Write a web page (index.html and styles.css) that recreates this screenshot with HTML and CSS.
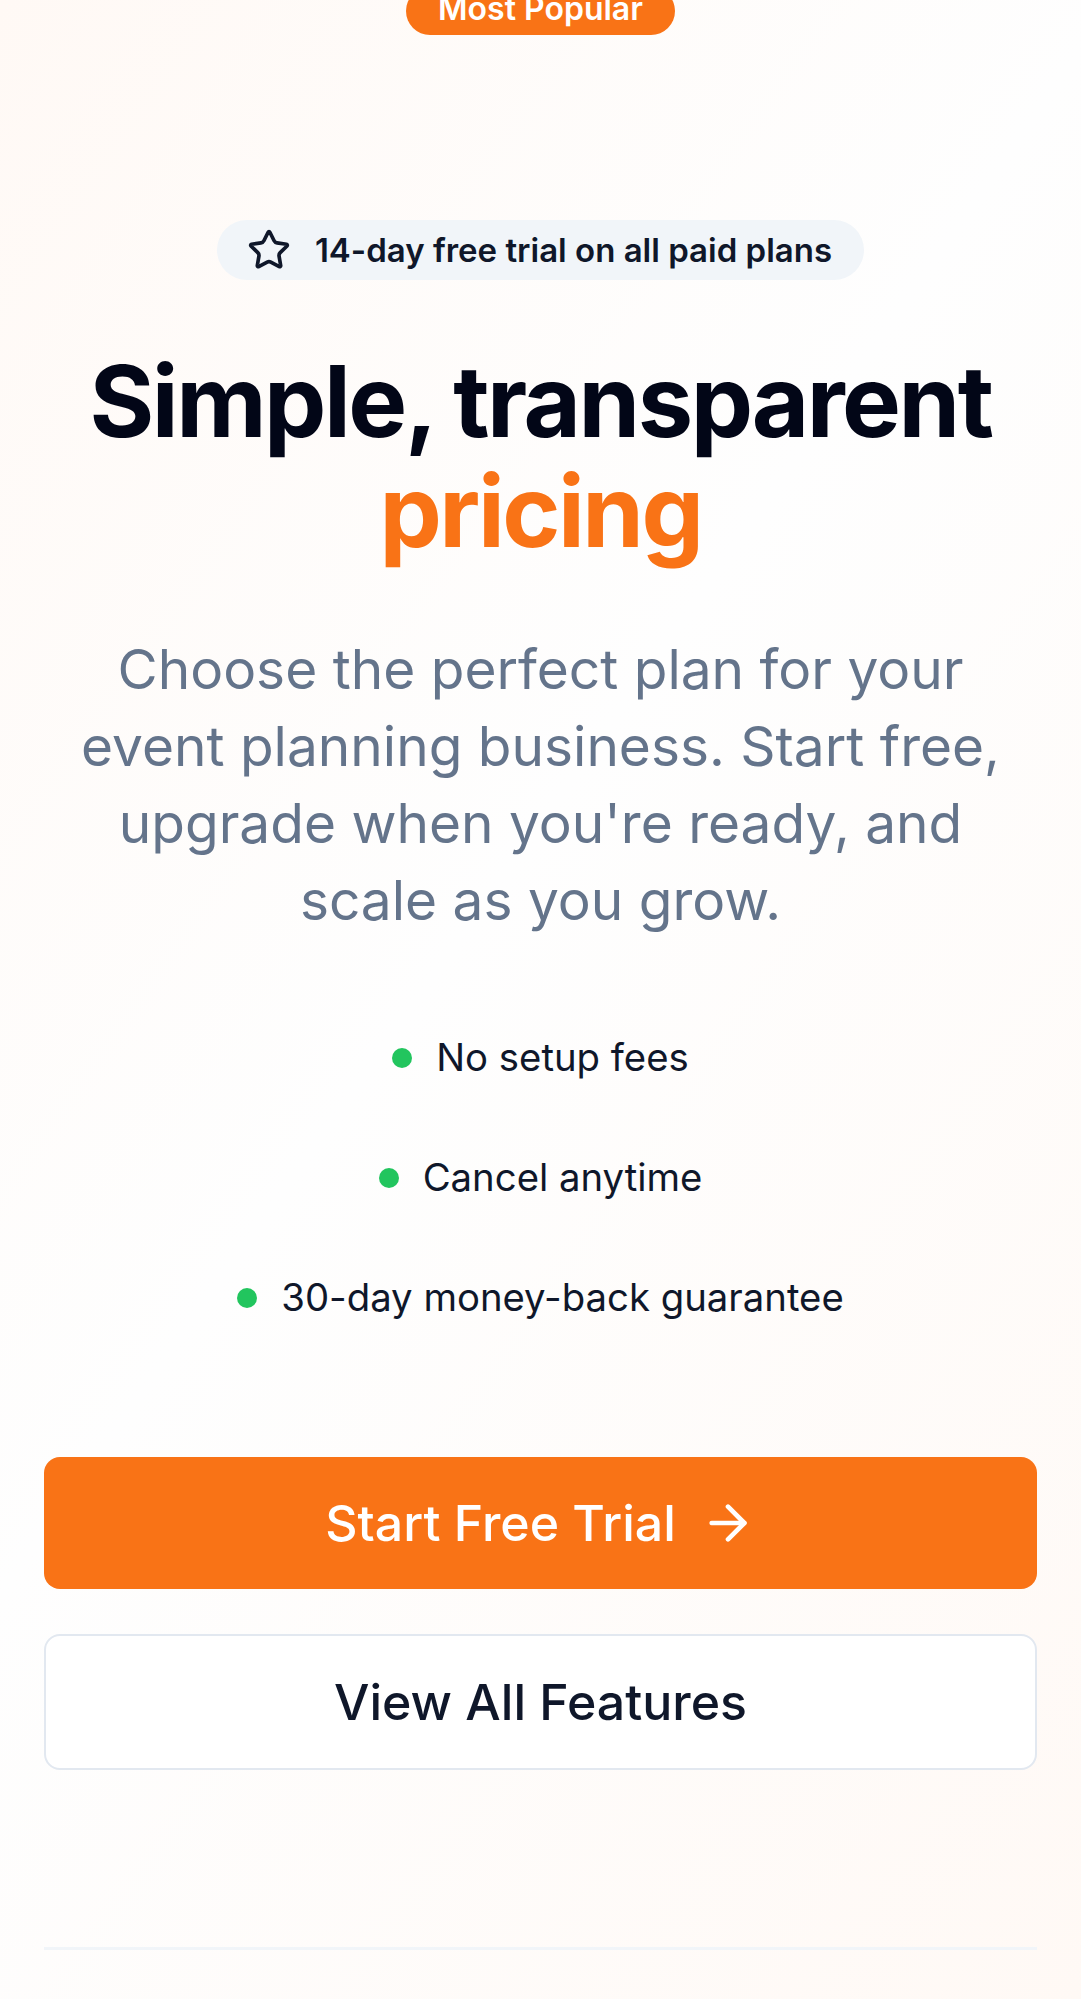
FILE: index.html
```html
<!DOCTYPE html>
<html lang="en">
<head>
<meta charset="utf-8">
<title>Pricing</title>
<link rel="stylesheet" href="styles.css">
</head>
<body>
<div class="page">
  <div class="popular">Most Popular</div>
  <section class="hero">
    <div class="badge">
      <svg class="star" viewBox="0 0 24 24" fill="none" stroke="currentColor" stroke-width="2" stroke-linecap="round" stroke-linejoin="round"><path d="M11.525 2.295a.53.53 0 0 1 .95 0l2.31 4.679a2.123 2.123 0 0 0 1.595 1.160l5.166.756a.53.53 0 0 1 .294.904l-3.736 3.638a2.123 2.123 0 0 0-.611 1.878l.882 5.14a.53.53 0 0 1-.771.56l-4.618-2.428a2.122 2.122 0 0 0-1.973 0L6.396 21.01a.53.53 0 0 1-.77-.56l.881-5.139a2.122 2.122 0 0 0-.611-1.879L2.16 9.795a.53.53 0 0 1 .294-.906l5.165-.755a2.122 2.122 0 0 0 1.597-1.16z"/></svg>
      <span>14-day free trial on all paid plans</span>
    </div>
    <h1 class="title">Simple, transparent <span class="accent">pricing</span></h1>
    <p class="lead">Choose the perfect plan for your event planning business. Start free, upgrade when you're ready, and scale as you grow.</p>
    <ul class="checks">
      <li><span class="dot"></span>No setup fees</li>
      <li><span class="dot"></span>Cancel anytime</li>
      <li><span class="dot"></span>30-day money-back guarantee</li>
    </ul>
    <div class="actions">
      <a class="btn btn-primary" href="#">Start Free Trial
        <svg class="arrow" viewBox="0 0 24 24" fill="none" stroke="currentColor" stroke-width="2" stroke-linecap="round" stroke-linejoin="round"><path d="M5 12h14"/><path d="m12 5 7 7-7 7"/></svg>
      </a>
      <a class="btn btn-secondary" href="#">View All Features</a>
    </div>
    <hr class="divider">
  </section>
</div>
</body>
</html>
```

FILE: styles.css
```css
* { box-sizing: border-box; }
html, body { margin: 0; padding: 0; }
body {
  font-family: Inter, "Noto Sans", "Liberation Sans", sans-serif;
  color: #0f172a;
  background: linear-gradient(125deg, #fff9f5 0%, #fefefe 45%, #fff9f5 100%);
  min-height: 1999px;
}
.page {
  position: relative;
  min-height: 1999px;
  overflow: hidden;
}
.popular {
  position: absolute;
  top: -13px;
  left: 406px;
  width: 269px;
  height: 48px;
  line-height: 40px;
  padding-top: 2px;
  border-radius: 999px;
  background: #f97316;
  color: #fff;
  font-weight: 600;
  font-size: 32px;
  text-align: center;
}
.hero {
  padding: 220px 44px 0;
  display: flex;
  flex-direction: column;
  align-items: center;
  text-align: center;
}
.badge {
  display: inline-flex;
  align-items: center;
  gap: 24px;
  height: 60px;
  padding: 0 32px 0 30px;
  border-radius: 999px;
  background: #f1f5f9;
  color: #0f172a;
  font-size: 33px;
  font-weight: 600;
}
.star { width: 44px; height: 44px; flex: none; }
.title {
  margin: 66px 0 0;
  font-size: 99px;
  line-height: 110px;
  font-weight: 700;
  letter-spacing: -0.025em;
  color: #020617;
}
.accent { color: #f97316; }
.lead {
  margin: 65px 0 0;
  max-width: 935px;
  font-size: 55px;
  line-height: 77px;
  color: #64748b;
}
.checks {
  list-style: none;
  margin: 90px 0 0;
  padding: 0;
  display: flex;
  flex-direction: column;
  align-items: center;
  gap: 63px;
}
.checks li {
  display: flex;
  align-items: center;
  gap: 24px;
  font-size: 38.3px;
  line-height: 57px;
  color: #0f172a;
}
.dot {
  width: 20px;
  height: 20px;
  border-radius: 50%;
  background: #22c55e;
  flex: none;
}
.actions {
  margin-top: 131px;
  width: 100%;
  display: flex;
  flex-direction: column;
  gap: 45px;
}
.btn {
  display: flex;
  align-items: center;
  justify-content: center;
  height: 132px;
  border-radius: 16px;
  font-size: 50px;
  font-weight: 500;
  text-decoration: none;
}
.btn-primary {
  background: #f97316;
  color: #fff;
  gap: 24px;
}
.arrow { width: 56px; height: 56px; flex: none; }
.btn-secondary {
  height: 136px;
  background: #fff;
  border: 2px solid #e2e8f0;
  color: #0f172a;
}
.divider {
  width: 100%;
  margin: 177px 0 0;
  border: 0;
  border-top: 3px solid #f1f5f9;
}
```
